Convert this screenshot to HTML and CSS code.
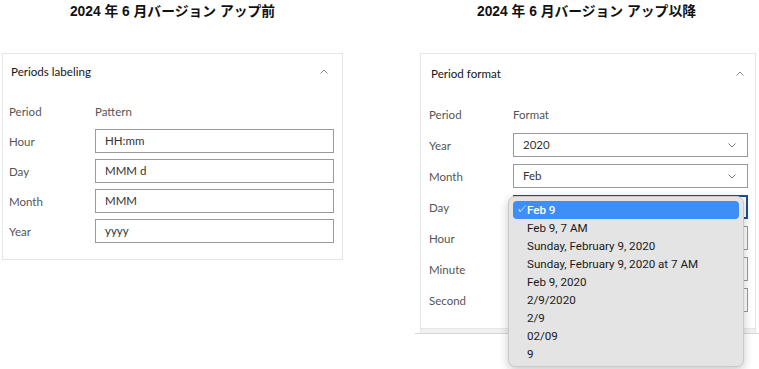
FILE: index.html
```html
<!doctype html>
<html lang="ja">
<head>
<meta charset="utf-8">
<title>Period format</title>
<link rel="stylesheet" href="styles.css">
</head>
<body>
<main class="page">
  <section class="col col-old">
    <h2 class="title">2024 年 6 月バージョン アップ前</h2>
    <div class="panel panel-old">
      <div class="panel-head">
        <span>Periods labeling</span>
        <svg class="chev" width="8" height="5" viewBox="0 0 8 5"><path d="M0.5 4.5 L4 1 L7.5 4.5" fill="none" stroke="#888" stroke-width="1"/></svg>
      </div>
      <div class="rows">
        <div class="lbl">Period</div><div class="lbl">Pattern</div>
        <div class="lbl">Hour</div><div class="field">HH:mm</div>
        <div class="lbl">Day</div><div class="field">MMM d</div>
        <div class="lbl">Month</div><div class="field">MMM</div>
        <div class="lbl">Year</div><div class="field">yyyy</div>
      </div>
    </div>
  </section>

  <section class="col col-new">
    <h2 class="title">2024 年 6 月バージョン アップ以降</h2>
    <div class="wrap">
      <div class="panel panel-new">
        <div class="panel-head">
          <span>Period format</span>
          <svg class="chev" width="8" height="5" viewBox="0 0 8 5"><path d="M0.5 4.5 L4 1 L7.5 4.5" fill="none" stroke="#888" stroke-width="1"/></svg>
        </div>
        <div class="rows">
          <div class="lbl">Period</div><div class="lbl">Format</div>
          <div class="lbl">Year</div><div class="field select">2020<svg width="8" height="5" viewBox="0 0 8 5"><path d="M0.5 0.5 L4 4 L7.5 0.5" fill="none" stroke="#777" stroke-width="1"/></svg></div>
          <div class="lbl">Month</div><div class="field select">Feb<svg width="8" height="5" viewBox="0 0 8 5"><path d="M0.5 0.5 L4 4 L7.5 0.5" fill="none" stroke="#777" stroke-width="1"/></svg></div>
          <div class="lbl">Day</div><div class="field select focus"></div>
          <div class="lbl">Hour</div><div class="field select"></div>
          <div class="lbl">Minute</div><div class="field select"></div>
          <div class="lbl">Second</div><div class="field select"></div>
        </div>
        <div class="band"></div>
        <ul class="menu">
          <li class="on"><span class="tick">✓</span>Feb 9</li>
          <li>Feb 9, 7 AM</li>
          <li>Sunday, February 9, 2020</li>
          <li>Sunday, February 9, 2020 at 7 AM</li>
          <li>Feb 9, 2020</li>
          <li>2/9/2020</li>
          <li>2/9</li>
          <li>02/09</li>
          <li>9</li>
        </ul>
      </div>
    </div>
  </section>
</main>
</body>
</html>
```

FILE: styles.css
```css
*{box-sizing:border-box}
html,body{height:100%}
body{margin:0;background:#fff;color:#333;font-family:"Lato","Noto Sans",sans-serif}
.page{display:flex;align-items:flex-start;min-height:369px}
.col-old{margin-left:2px;width:341px}
.col-new{margin-left:72px;width:344px}
.title{margin:0;height:53px;padding-top:3px;line-height:18px;font-size:13.8px;font-weight:700;color:#111;text-align:center;font-family:"Liberation Sans","Noto Sans CJK JP",sans-serif}
.col-new .title{padding-right:14px;padding-left:13px}
.wrap{border-bottom:1px solid #d8d8d8;padding-left:5px;padding-right:3px}
.panel{border:1px solid #e6e6e6;border-bottom:0;position:relative;background:#fff}
.panel-old{border-bottom:1px solid #e6e6e6;padding-bottom:16px}
.panel-head{display:flex;align-items:center;justify-content:space-between;height:34px;padding:0 14px 0 8px;font-size:11.6px;color:#151515}
.panel-new .panel-head{height:38px;padding:0 11px 0 10px}
.chev{display:block}
.rows{display:grid;grid-template-columns:86px 1fr;grid-auto-rows:24px;row-gap:6px;padding:11px 8px 0 6px;align-items:center;font-size:11.5px}
.panel-new .rows{grid-template-columns:84px 1fr;row-gap:7px;padding:10px 7px 16px 8px}
.lbl{color:#555}
.field{height:24px;border:1px solid #9a9a9a;padding:0 9px;line-height:22px;color:#333;background:#fff}
.select{display:flex;align-items:center;justify-content:space-between;padding-right:11px}
.focus{border:2px solid #1e4f8f}
.band{height:5px;background:#f1f1f1;border-top:1px solid #e6e6e6}
.menu{position:absolute;left:87px;top:142px;width:236px;margin:0;padding:4px 4px 3px;list-style:none;background:#e4e4e4;border:1px solid #c9c9c9;border-radius:7px;box-shadow:0 3px 10px rgba(0,0,0,.22);font-family:"Roboto","Noto Sans",sans-serif;font-size:11.6px;color:#1a1a1a;z-index:2}
.menu li{height:18px;line-height:18px;padding-left:14px;position:relative;border-radius:4px}
.menu li.on{background:#3d8ef7;color:#fff;font-weight:500}
.tick{position:absolute;left:3px;top:0;font-size:11px}
```
